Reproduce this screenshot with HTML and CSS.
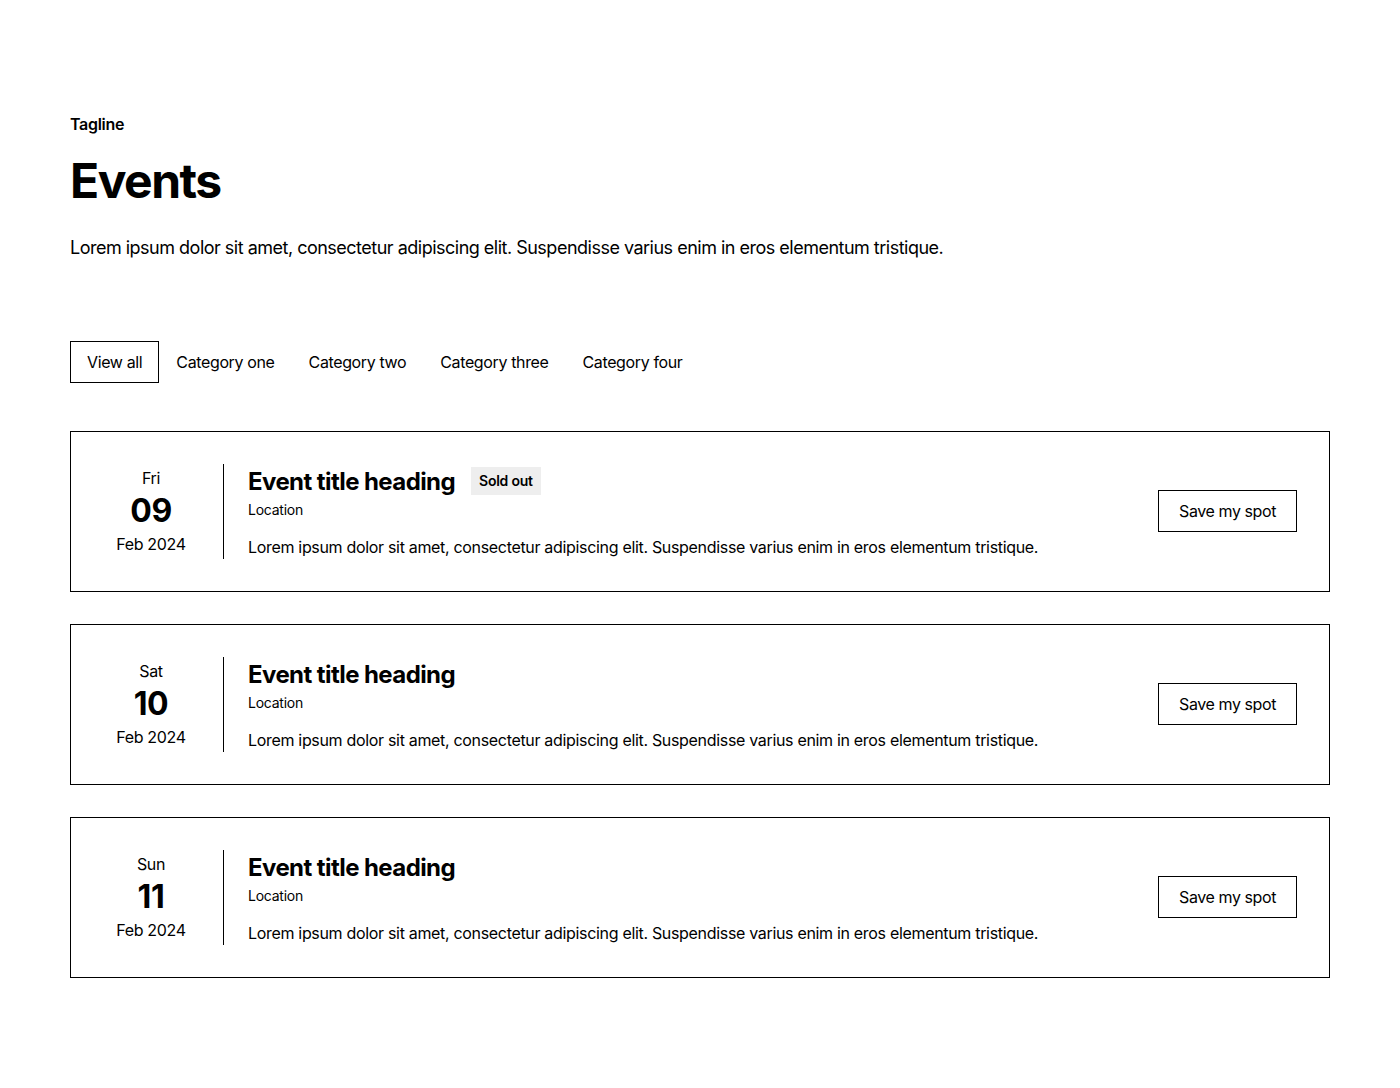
FILE: index.html
```html
<!DOCTYPE html>
<html lang="en">
<head>
<meta charset="utf-8">
<title>Events</title>
<link rel="stylesheet" href="styles.css">
</head>
<body>
<section class="events">
  <header class="intro">
    <p class="tagline">Tagline</p>
    <h1 class="title">Events</h1>
    <p class="lead">Lorem ipsum dolor sit amet, consectetur adipiscing elit. Suspendisse varius enim in eros elementum tristique.</p>
  </header>
  <nav class="tabs">
    <button class="tab active">View all</button>
    <button class="tab">Category one</button>
    <button class="tab">Category two</button>
    <button class="tab">Category three</button>
    <button class="tab">Category four</button>
  </nav>
  <div class="list">
    <article class="card">
      <div class="date">
        <span class="day">Fri</span>
        <span class="num">09</span>
        <span class="month">Feb 2024</span>
      </div>
      <div class="body">
        <div class="head">
          <h2 class="event-title">Event title heading</h2>
          <span class="badge">Sold out</span>
        </div>
        <p class="location">Location</p>
        <p class="desc">Lorem ipsum dolor sit amet, consectetur adipiscing elit. Suspendisse varius enim in eros elementum tristique.</p>
      </div>
      <button class="cta">Save my spot</button>
    </article>
    <article class="card">
      <div class="date">
        <span class="day">Sat</span>
        <span class="num">10</span>
        <span class="month">Feb 2024</span>
      </div>
      <div class="body">
        <div class="head">
          <h2 class="event-title">Event title heading</h2>
        </div>
        <p class="location">Location</p>
        <p class="desc">Lorem ipsum dolor sit amet, consectetur adipiscing elit. Suspendisse varius enim in eros elementum tristique.</p>
      </div>
      <button class="cta">Save my spot</button>
    </article>
    <article class="card">
      <div class="date">
        <span class="day">Sun</span>
        <span class="num">11</span>
        <span class="month">Feb 2024</span>
      </div>
      <div class="body">
        <div class="head">
          <h2 class="event-title">Event title heading</h2>
        </div>
        <p class="location">Location</p>
        <p class="desc">Lorem ipsum dolor sit amet, consectetur adipiscing elit. Suspendisse varius enim in eros elementum tristique.</p>
      </div>
      <button class="cta">Save my spot</button>
    </article>
  </div>
</section>
</body>
</html>
```
FILE: styles.css
```css
* { box-sizing: border-box; }
html, body { margin: 0; padding: 0; background: #fff; }
body {
  font-family: Inter, "Noto Sans", sans-serif;
  color: #000;
  font-size: 16px;
  line-height: 1.5;
  letter-spacing: -0.022em;
}
.events {
  padding: 112px 70px 110px;
}
.tagline {
  margin: 0 0 16px;
  font-weight: 600;
  font-size: 16px;
  line-height: 24px;
  letter-spacing: -0.018em;
}
.title {
  margin: 0 0 24px;
  font-size: 48px;
  line-height: 1.2;
  font-weight: 700;
  letter-spacing: -0.031em;
}
.lead {
  margin: 0;
  font-size: 18px;
  line-height: 27px;
  letter-spacing: -0.028em;
}
.tabs {
  display: flex;
  margin-top: 80px;
}
.tab {
  font: inherit;
  letter-spacing: -0.023em;
  background: none;
  color: #000;
  border: 1px solid transparent;
  padding: 8px 16px;
  line-height: 24px;
  cursor: pointer;
}
.tab.active { border-color: #000; }
.list {
  margin-top: 48px;
  display: flex;
  flex-direction: column;
  gap: 32px;
}
.card {
  display: flex;
  align-items: center;
  border: 1px solid #000;
  padding: 32px;
}
.date {
  align-self: stretch;
  width: 121px;
  padding-right: 24px;
  border-right: 1px solid #000;
  display: flex;
  flex-direction: column;
  align-items: center;
  justify-content: center;
  flex-shrink: 0;
}
.day, .month { font-size: 16px; line-height: 24px; }
.num { font-size: 32px; line-height: 1.3; font-weight: 700; letter-spacing: -0.01em; }
.body {
  flex: 1;
  margin-left: 24px;
}
.head {
  display: flex;
  align-items: center;
  gap: 16px;
}
.event-title {
  margin: 0;
  font-size: 24px;
  line-height: 35px;
  font-weight: 700;
  letter-spacing: -0.024em;
}
.badge {
  background: #eeeeee;
  font-size: 14px;
  font-weight: 600;
  line-height: 21px;
  padding: 3px 8px 4px;
  letter-spacing: -0.018em;
}
.location {
  margin: 0;
  font-size: 14px;
  line-height: 21px;
  letter-spacing: -0.018em;
}
.desc {
  margin: 15px 0 0;
  font-size: 16px;
  line-height: 24px;
  letter-spacing: -0.02em;
}
.cta {
  font: inherit;
  letter-spacing: -0.026em;
  background: #fff;
  color: #000;
  border: 1px solid #000;
  padding: 8px 20px;
  line-height: 24px;
  cursor: pointer;
}
```
